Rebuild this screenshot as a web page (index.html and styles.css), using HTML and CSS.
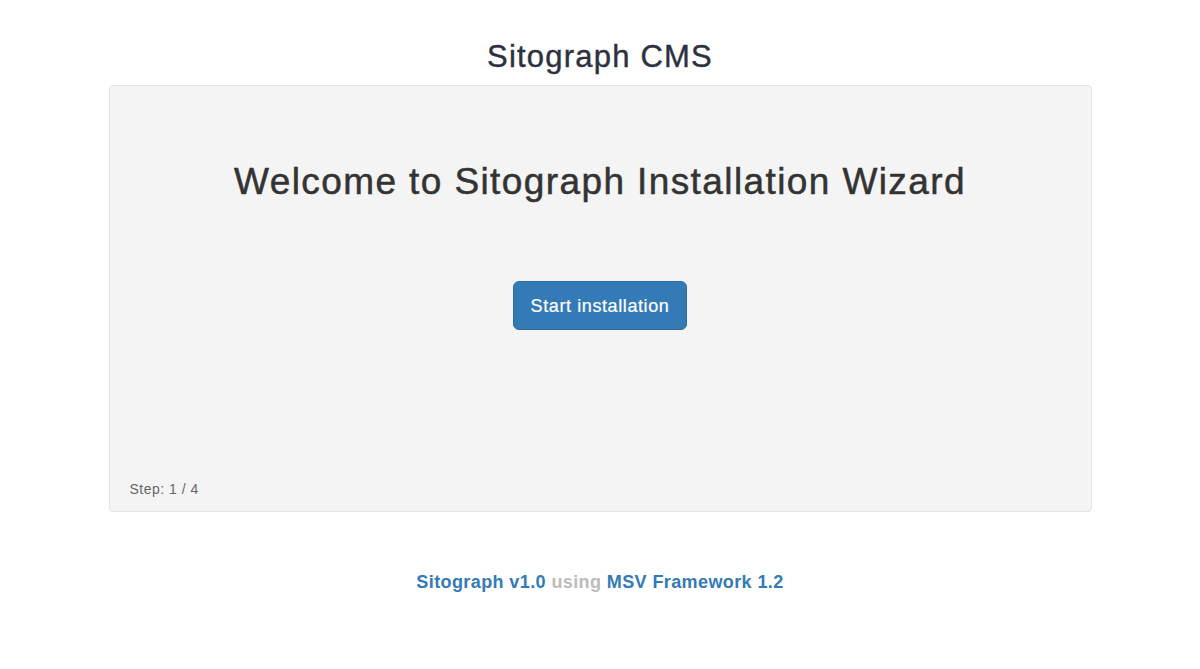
FILE: index.html
```html
<!DOCTYPE html>
<html>
<head>
<meta charset="utf-8">
<link rel="stylesheet" href="styles.css">
</head>
<body>
<h1 class="site-title">Sitograph CMS</h1>
<div class="panel">
  <h2 class="welcome">Welcome to Sitograph Installation Wizard</h2>
  <div class="actions"><button class="btn-start">Start installation</button></div>
  <div class="step">Step: 1 / 4</div>
</div>
<div class="footer"><a class="link">Sitograph v1.0</a> <span class="muted">using</span> <a class="link">MSV Framework 1.2</a></div>
</body>
</html>
```
FILE: styles.css
```css
html, body { margin: 0; padding: 0; background: #fff; }
body { font-family: "Liberation Sans", Arial, sans-serif; color: #333; }
.site-title {
  margin: 40px 0 12px;
  text-align: center;
  font-size: 31px;
  line-height: 33px;
  font-weight: 500;
  letter-spacing: 1.2px;
  -webkit-text-stroke: 0.4px #2c3140;
  color: #2c3140;
}
.panel {
  width: 983px;
  margin: 0 auto;
  background: #f4f4f4;
  border: 1px solid #e3e3e3;
  border-radius: 4px;
  padding: 76px 20px 12px;
  box-sizing: border-box;
  height: 427px;
  display: flex;
  flex-direction: column;
}
.welcome {
  margin: 0;
  text-align: center;
  font-size: 37px;
  line-height: 40px;
  font-weight: 500;
  letter-spacing: 1.4px;
  -webkit-text-stroke: 0.5px #333;
  color: #333;
}
.actions { text-align: center; margin-top: 79px; }
.btn-start {
  font-family: inherit;
  font-size: 18px;
  line-height: 24px;
  letter-spacing: 0.6px;
  -webkit-text-stroke: 0.2px #fff;
  color: #fff;
  background: #337ab7;
  border: 1px solid #2e6da4;
  border-radius: 6px;
  padding: 11px 0;
  width: 174px;
  height: 49px;
}
.step {
  margin-top: auto;
  font-size: 14px;
  line-height: 20px;
  letter-spacing: 0.5px;
  color: #666;
}
.footer {
  margin-top: 57px;
  text-align: center;
  font-size: 18px;
  line-height: 26px;
  font-weight: bold;
  letter-spacing: 0.4px;
}
.link { color: #337ab7; text-decoration: none; }
.muted { color: #bbb; }
```
